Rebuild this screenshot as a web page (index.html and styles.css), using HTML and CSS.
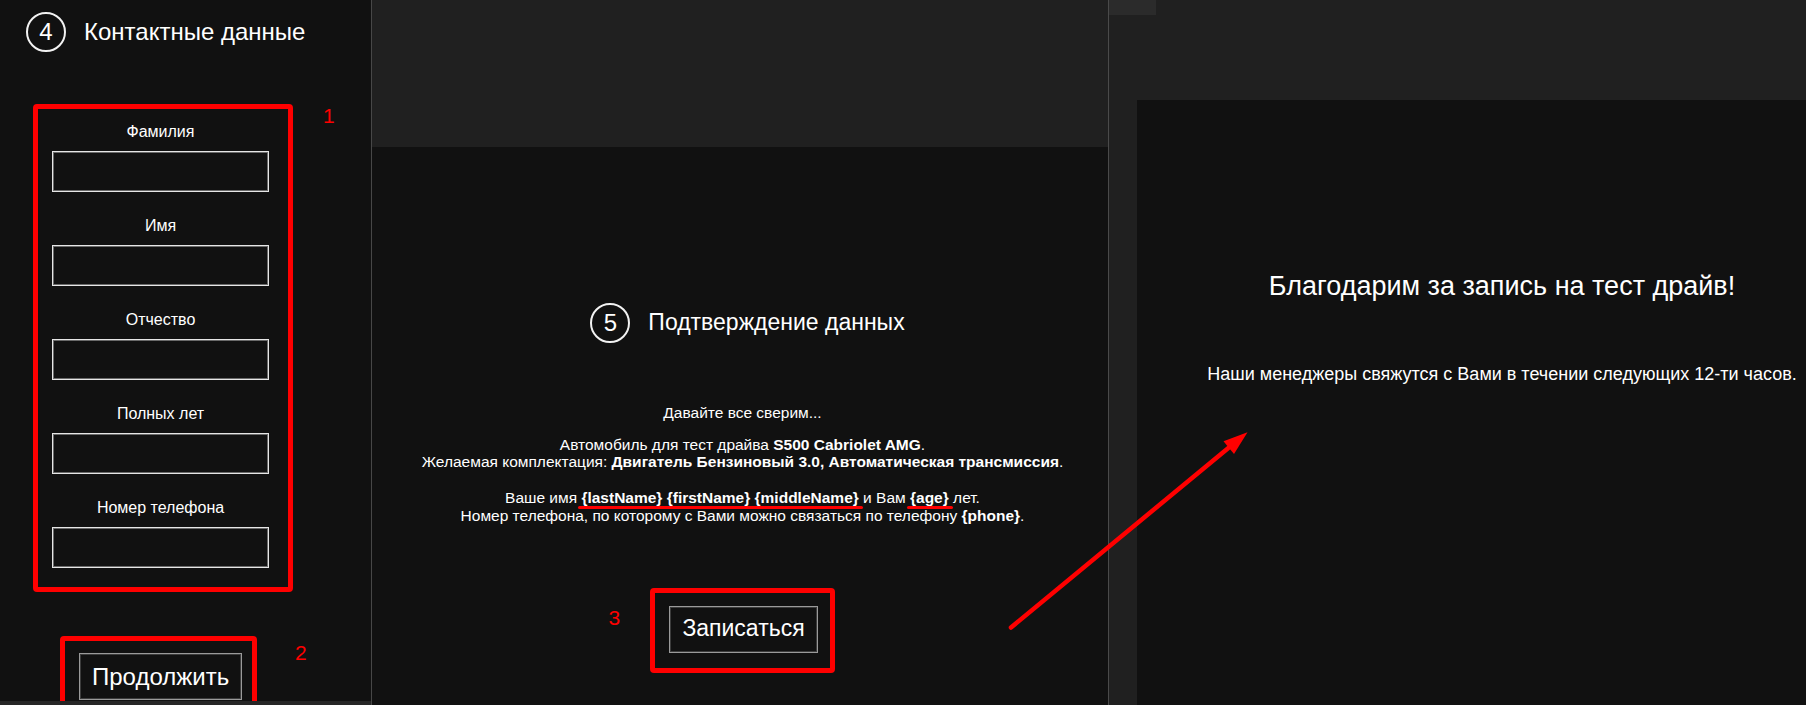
FILE: index.html
```html
<!DOCTYPE html>
<html lang="ru">
<head>
<meta charset="utf-8">
<title>Тест драйв — запись</title>
<link rel="stylesheet" href="styles.css">
</head>
<body>
<div class="page">
  <section class="panel panel-contacts">
    <header class="step-head">
      <span class="step-num">4</span>
      <h2 class="step-title">Контактные данные</h2>
    </header>
    <div class="annot-row row-form">
      <form class="annot-box contact-form">
        <label class="field"><span class="field-label">Фамилия</span><input class="field-input" type="text"></label>
        <label class="field"><span class="field-label">Имя</span><input class="field-input" type="text"></label>
        <label class="field"><span class="field-label">Отчество</span><input class="field-input" type="text"></label>
        <label class="field"><span class="field-label">Полных лет</span><input class="field-input" type="text"></label>
        <label class="field"><span class="field-label">Номер телефона</span><input class="field-input" type="text"></label>
      </form>
      <span class="annot-num num-1">1</span>
    </div>
    <div class="annot-row row-next">
      <div class="annot-box next-wrap"><button class="btn" type="button">Продолжить</button></div>
      <span class="annot-num num-2">2</span>
    </div>
    <div class="hscroll"></div>
  </section>

  <section class="panel panel-confirm">
    <div class="band"></div>
    <div class="confirm-body">
      <header class="step-head confirm-head">
        <span class="step-num">5</span>
        <h2 class="step-title">Подтверждение данных</h2>
      </header>
      <div class="summary">
        <p class="summary-p p-first">Давайте все сверим...</p>
        <p class="summary-p p-car">Автомобиль для тест драйва <b>S500 Cabriolet AMG</b>.<br>Желаемая комплектация: <b>Двигатель Бензиновый 3.0, Автоматическая трансмиссия</b>.</p>
        <p class="summary-p p-person">Ваше имя <b class="marked">{lastName} {firstName} {middleName}</b> и Вам <b class="marked">{age}</b> лет.<br>Номер телефона, по которому с Вами можно связаться по телефону <b>{phone}</b>.</p>
      </div>
      <div class="annot-box submit-wrap">
        <span class="annot-num num-3">3</span>
        <button class="btn" type="button">Записаться</button>
      </div>
    </div>
  </section>

  <section class="panel panel-thanks">
    <div class="tab"></div>
    <div class="thanks-box">
      <h2 class="thanks-title">Благодарим за запись на тест драйв!</h2>
      <p class="thanks-text">Наши менеджеры свяжутся с Вами в течении следующих 12-ти часов.</p>
    </div>
  </section>

  <svg class="arrow" width="1806" height="705" viewBox="0 0 1806 705" aria-hidden="true">
    <line x1="1011" y1="627.5" x2="1232" y2="445" stroke="#ff0000" stroke-width="4.5" stroke-linecap="round"/>
    <polygon points="1247.5,432.3 1234,454 1223.5,441.2" fill="#ff0000"/>
  </svg>
</div>
</body>
</html>
```

FILE: styles.css
```css
* { box-sizing: border-box; }

html, body {
  margin: 0;
  padding: 0;
  background: #111111;
}

body {
  font-family: "Liberation Sans", Arial, sans-serif;
  color: #ffffff;
}

.page {
  position: relative;
  display: flex;
  width: 1806px;
  height: 705px;
  overflow: hidden;
}

.panel {
  position: relative;
  height: 705px;
  overflow: hidden;
}

/* ---------- left: contacts ---------- */
.panel-contacts {
  width: 372px;
  flex: none;
  background: #111111;
  border-right: 1px solid #474747;
  display: flex;
  flex-direction: column;
}

.step-head {
  display: flex;
  align-items: center;
  gap: 18px;
}

.panel-contacts .step-head {
  padding: 12px 0 0 26px;
}

.step-num {
  width: 40px;
  height: 40px;
  flex: none;
  border: 2px solid #f2f2f2;
  border-radius: 50%;
  display: flex;
  align-items: center;
  justify-content: center;
  font-size: 24px;
  line-height: 1;
}

.step-title {
  margin: 0;
  font-size: 24px;
  font-weight: normal;
  line-height: 27.6px;
  white-space: nowrap;
}

.annot-row {
  display: flex;
  align-items: flex-start;
}

.annot-box {
  border: 5px solid #ff0000;
  border-radius: 4px;
}

.annot-num {
  color: #ff0000;
  font-size: 21px;
  line-height: 24px;
}

.row-form {
  margin: 52px 0 0 33px;
}

.contact-form {
  width: 260px;
  padding: 14px 19px 19px 14px;
  display: flex;
  flex-direction: column;
  gap: 25px;
}

.field {
  display: flex;
  flex-direction: column;
  align-items: center;
  gap: 11px;
}

.field-label {
  font-size: 16px;
  line-height: 17px;
}

.field-input {
  display: block;
  width: 217px;
  height: 41px;
  margin: 0;
  background: #111111;
  border: 1px solid #e6e6e6;
  box-shadow: inset 0 0 0 1px #6a6a6a;
  color: #ffffff;
  font: inherit;
  padding: 0 6px;
}

.num-1 {
  margin-left: 30px;
}

.row-next {
  margin: 44px 0 0 60px;
}

.next-wrap {
  width: 197px;
  padding: 12px 10px 14px 14px;
}

.num-2 {
  margin: 5px 0 0 38px;
}

.btn {
  display: block;
  height: 47px;
  margin: 0;
  padding: 0 12px;
  background: #111111;
  color: #ffffff;
  border: 1px solid #9a9a9a;
  box-shadow: inset 0 0 0 1px #3c3c3c;
  font-family: inherit;
  font-size: 24px;
  line-height: 27.6px;
  white-space: nowrap;
}

.next-wrap .btn {
  width: 163px;
}

.hscroll {
  position: absolute;
  left: 0;
  right: 0;
  bottom: 0;
  height: 4px;
  background: #262626;
}

/* ---------- middle: confirmation ---------- */
.panel-confirm {
  width: 737px;
  flex: none;
  background: #111111;
  border-right: 1px solid #4a4a4a;
  display: flex;
  flex-direction: column;
}

.band {
  height: 147px;
  flex: none;
  background: #202020;
}

.confirm-body {
  display: flex;
  flex-direction: column;
  align-items: center;
  padding-left: 5px;
}

.confirm-head {
  margin-top: 156px;
  padding-left: 10px;
}

.confirm-head .step-title {
  font-size: 23px;
}

.summary {
  margin-top: 61px;
  text-align: center;
  font-size: 15.5px;
  line-height: 17.7px;
}

.summary-p {
  margin: 0;
}

.p-car {
  margin-top: 14px;
}

.p-person {
  margin-top: 18px;
}

.marked {
  position: relative;
}

.marked::after {
  content: "";
  position: absolute;
  left: -3px;
  right: -4px;
  top: 100%;
  height: 3px;
  border-radius: 2px;
  background: #ff0000;
}

.submit-wrap {
  position: relative;
  margin-top: 63px;
  padding: 13px 12px 15px 14px;
}

.submit-wrap .btn {
  font-size: 23px;
}

.num-3 {
  position: absolute;
  left: -47px;
  top: 13px;
}

/* ---------- right: thanks ---------- */
.panel-thanks {
  flex: 1;
  min-width: 0;
  background: #202020;
  display: flex;
  flex-direction: column;
}

.tab {
  width: 47px;
  height: 15px;
  flex: none;
  background: #2b2b2b;
}

.thanks-box {
  flex: 1;
  width: 730px;
  margin: 85px 0 0 28px;
  background: #111111;
  display: flex;
  flex-direction: column;
  align-items: center;
  text-align: center;
}

.thanks-title {
  margin: 171px 0 0;
  font-size: 27px;
  font-weight: normal;
  line-height: 31px;
  white-space: nowrap;
}

.thanks-text {
  margin: 62px 0 0;
  font-size: 18px;
  line-height: 21px;
  white-space: nowrap;
}

/* ---------- annotation overlay ---------- */
.arrow {
  position: absolute;
  left: 0;
  top: 0;
  pointer-events: none;
}
```
